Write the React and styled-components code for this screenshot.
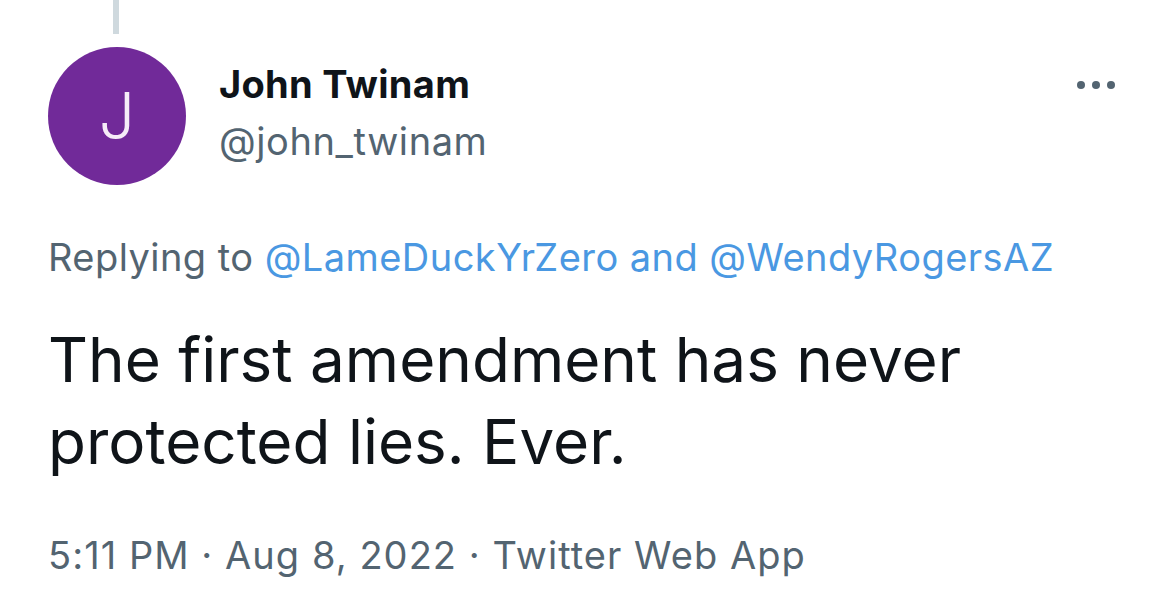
import React from 'react'
import styled, { createGlobalStyle } from 'styled-components'

const GlobalStyle = createGlobalStyle`
  html, body {
    margin: 0;
    padding: 0;
    background: #ffffff;
  }
  body {
    font-family: Inter, "Noto Sans", "Liberation Sans", sans-serif;
    -webkit-font-smoothing: antialiased;
  }
`

const Page = styled.div`
  width: 1169px;
  height: 614px;
  box-sizing: border-box;
  padding: 0 54px 0 48px;
  overflow: hidden;
  background: #fff;
`

const ThreadLine = styled.div`
  width: 6px;
  height: 34px;
  margin-left: 65px;
  background: #cfd9de;
`

const Header = styled.div`
  display: flex;
  align-items: flex-start;
  margin-top: 13px;
`

const Avatar = styled.div`
  width: 138px;
  height: 138px;
  flex: 0 0 138px;
  border-radius: 50%;
  background: #712a99;
  color: #f6ecf8;
  display: flex;
  align-items: center;
  justify-content: center;
  font-size: 64px;
  font-weight: 300;
  line-height: 1;
`

const NameBlock = styled.div`
  display: flex;
  flex-direction: column;
  margin-left: 33px;
  margin-top: 13px;
`

const Name = styled.div`
  font-size: 38px;
  font-weight: 700;
  line-height: 48px;
  letter-spacing: 0.3px;
  color: #0f1419;
`

const Handle = styled.div`
  font-size: 38px;
  font-weight: 400;
  line-height: 66px;
  letter-spacing: 0.6px;
  color: #536471;
`

const More = styled.svg`
  margin-left: auto;
  margin-top: 34px;
  flex: 0 0 auto;
`

const ReplyLine = styled.div`
  margin-top: 48px;
  font-size: 38px;
  line-height: 48px;
  letter-spacing: 0.45px;
  color: #536471;
  white-space: nowrap;
`

const Mention = styled.span`
  color: #4a98e2;
`

const Body = styled.div`
  margin-top: 38px;
  font-size: 62px;
  line-height: 82px;
  color: #0f1419;
  max-width: 1000px;
`

const Meta = styled.div`
  margin-top: 48px;
  font-size: 38px;
  line-height: 48px;
  letter-spacing: 1.05px;
  color: #536471;
  white-space: nowrap;
`

export default function App() {
  return (
    <>
      <GlobalStyle />
      <Page>
        <ThreadLine />
        <Header>
          <Avatar>J</Avatar>
          <NameBlock>
            <Name>John Twinam</Name>
            <Handle>@john_twinam</Handle>
          </NameBlock>
          <More width="38" height="8" viewBox="0 0 38 8">
            <circle cx="4" cy="4" r="4" fill="#536471" />
            <circle cx="19" cy="4" r="4" fill="#536471" />
            <circle cx="34" cy="4" r="4" fill="#536471" />
          </More>
        </Header>
        <ReplyLine>
          Replying to <Mention>@LameDuckYrZero and @WendyRogersAZ</Mention>
        </ReplyLine>
        <Body>The first amendment has never protected lies. Ever.</Body>
        <Meta>5:11 PM · Aug 8, 2022 · Twitter Web App</Meta>
      </Page>
    </>
  )
}
